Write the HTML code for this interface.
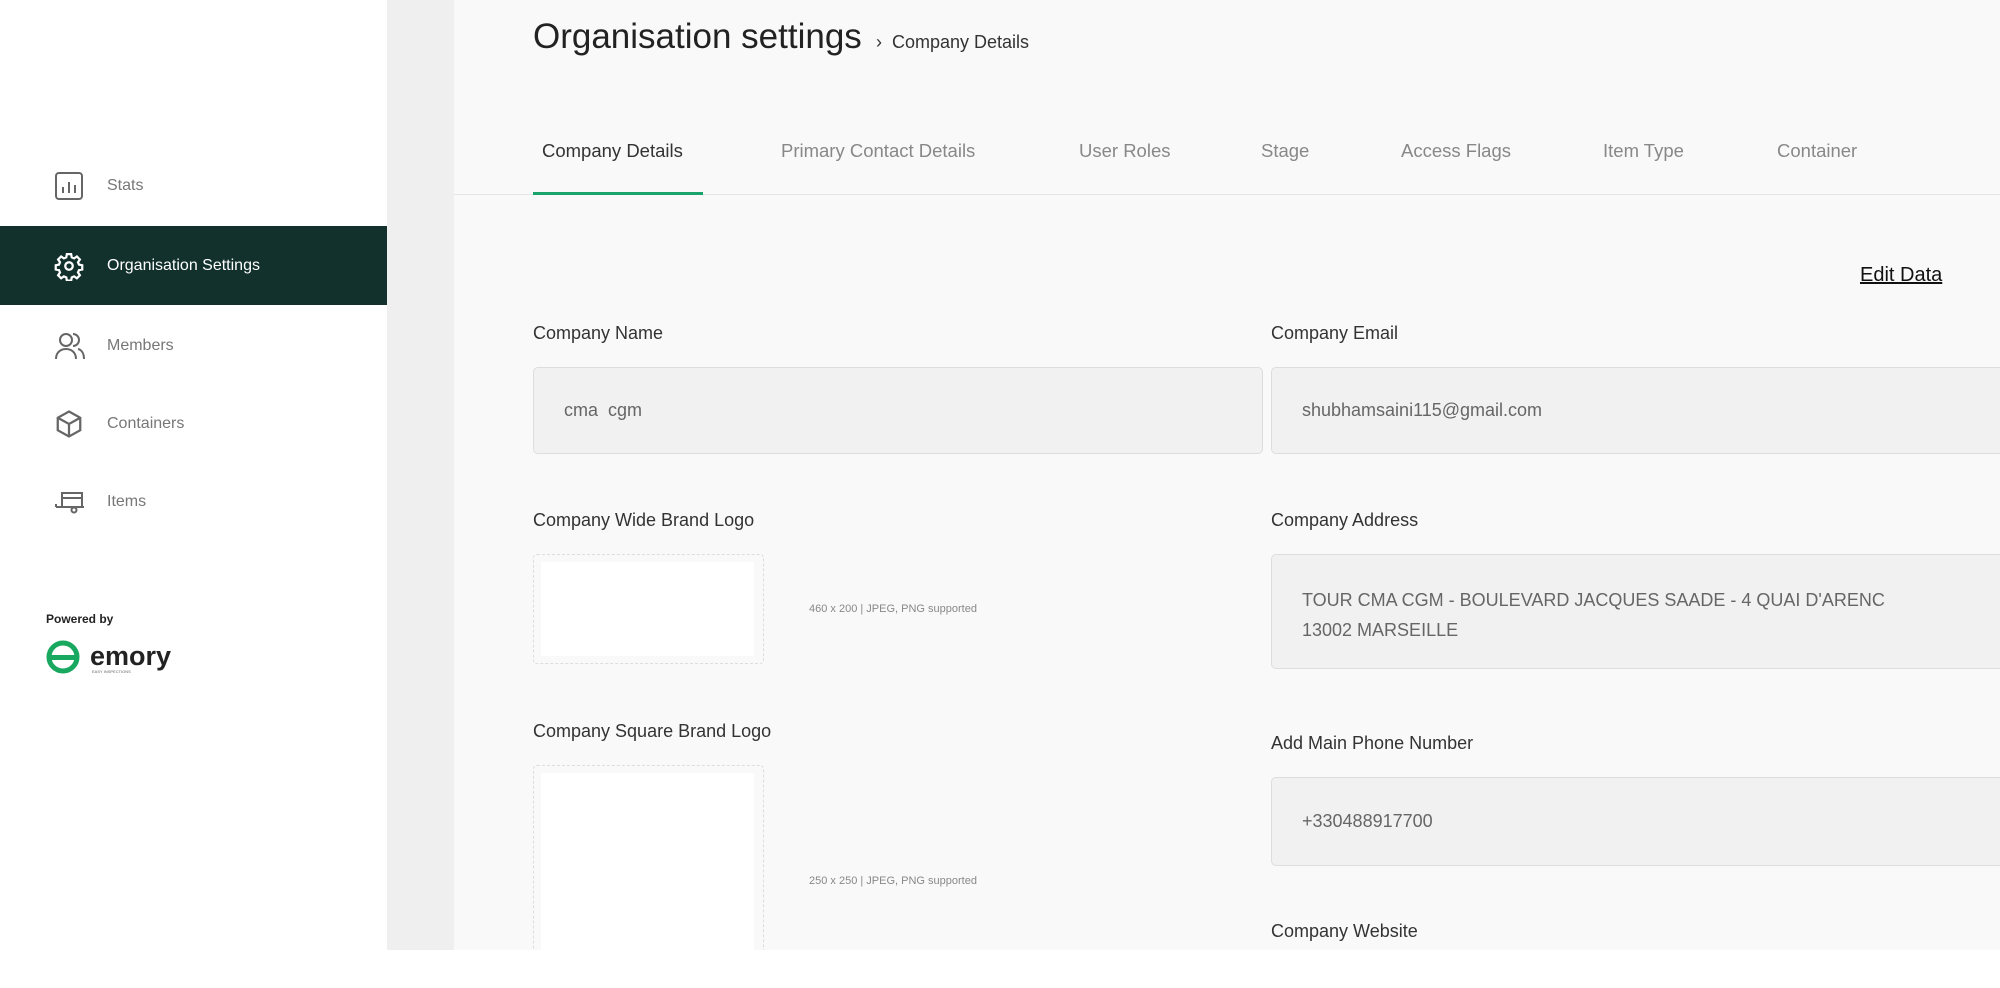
<!DOCTYPE html>
<html><head><meta charset="utf-8"><style>
*{box-sizing:border-box;margin:0;padding:0}
body{width:2000px;height:988px;overflow:hidden;background:#fff;font-family:"Liberation Sans",sans-serif;position:relative}
.abs{position:absolute}
.side{left:0;top:0;width:387px;height:988px;background:#fff}
.gray{left:387px;top:0;width:67px;height:950px;background:#efefef}
.main{left:454px;top:0;width:1546px;height:950px;background:#f9f9f9}
.nav{position:absolute;left:0;width:387px;height:79px;display:flex;align-items:center;font-size:16px;color:#777}
.nav svg{position:absolute;left:54px}
.nav span{position:absolute;left:107px}
.lbl{position:absolute;font-size:18px;color:#333}
.inp{position:absolute;background:#f1f1f1;border:1.5px solid #ddd;border-radius:5px;font-size:18px;color:#666;padding-left:30px}
.logo{position:absolute;border:1.5px dashed #ddd;border-radius:4px;background:#f9f9f9}
.logo div{position:absolute;left:7px;top:7px;right:9px;bottom:7px;background:#fff}
.hint{position:absolute;font-size:11px;color:#888}
.tab{position:absolute;top:140px;font-size:18.5px;color:#888}
</style></head><body>
<div class="abs side">
 <div class="nav" style="top:146px"><svg width="30" height="30" viewBox="0 0 30 30" fill="none" stroke="#666" stroke-width="2"><rect x="2" y="2" width="26" height="26" rx="3"/><path d="M9 22v-6M15 22v-11M21 22v-8"/></svg><span>Stats</span></div>
 <div class="nav" style="top:226px;background:#12312c;color:#fff"><svg width="30" height="30" viewBox="0 0 24 24" fill="none" stroke="#fff" stroke-width="1.8"><circle cx="12" cy="12" r="3"/><path d="M10.3 2.5h3.4l.5 2.6 1.9.8 2.2-1.5 2.4 2.4-1.5 2.2.8 1.9 2.6.5v3.4l-2.6.5-.8 1.9 1.5 2.2-2.4 2.4-2.2-1.5-1.9.8-.5 2.6h-3.4l-.5-2.6-1.9-.8-2.2 1.5-2.4-2.4 1.5-2.2-.8-1.9-2.6-.5v-3.4l2.6-.5.8-1.9-1.5-2.2 2.4-2.4 2.2 1.5 1.9-.8z"/></svg><span>Organisation Settings</span></div>
 <div class="nav" style="top:306px"><svg width="32" height="30" viewBox="0 0 32 30" fill="none" stroke="#666" stroke-width="2"><circle cx="12" cy="9" r="6"/><path d="M2 28c0-6 4-10 10-10s10 4 10 10"/><path d="M19 3a6 6 0 0 1 0 12M24 18c4 1 6 5 6 10"/></svg><span>Members</span></div>
 <div class="nav" style="top:384px"><svg width="30" height="30" viewBox="0 0 24 24" fill="none" stroke="#666" stroke-width="1.8"><path d="M12 2l9 5v10l-9 5-9-5V7z"/><path d="M3 7l9 5 9-5M12 12v10"/></svg><span>Containers</span></div>
 <div class="nav" style="top:462px"><svg width="32" height="30" viewBox="0 0 32 30" fill="none" stroke="#666" stroke-width="2"><path d="M8 6h20v14H8zM8 11h20"/><path d="M2 20h28"/><path d="M2 17v3"/><circle cx="20" cy="23" r="2.5"/></svg><span>Items</span></div>
 <div class="abs" style="left:46px;top:612px;font-size:12px;color:#222;font-weight:bold">Powered by</div>
 <svg class="abs" style="left:46px;top:640px" width="150" height="36" viewBox="0 0 150 36"><circle cx="17" cy="17" r="14" fill="none" stroke="#18a860" stroke-width="5"/><rect x="3" y="15" width="28" height="5" fill="#18a860"/><text x="44" y="25" font-family="Liberation Sans" font-weight="bold" font-size="27" fill="#222">emory</text><text x="46" y="33" font-family="Liberation Sans" font-size="4" fill="#666">EASY INSPECTIONS</text></svg>
</div>
<div class="abs gray"></div>
<div class="abs main"></div>
<div class="abs" style="left:533px;top:17px;font-size:35px;color:#222">Organisation settings</div>
<div class="abs" style="left:876px;top:32px;font-size:18px;color:#333">›&nbsp;&nbsp;Company Details</div>
<div class="tab" style="left:542px;color:#333">Company Details</div>
<div class="tab" style="left:781px">Primary Contact Details</div>
<div class="tab" style="left:1079px">User Roles</div>
<div class="tab" style="left:1261px">Stage</div>
<div class="tab" style="left:1401px">Access Flags</div>
<div class="tab" style="left:1603px">Item Type</div>
<div class="tab" style="left:1777px">Container</div>
<div class="abs" style="left:454px;top:194px;width:1546px;height:1px;background:#e6e6e6"></div>
<div class="abs" style="left:533px;top:192px;width:170px;height:3px;background:#1aa36b"></div>
<div class="abs" style="left:1860px;top:264px;font-size:20px;color:#111;text-decoration:underline">Edit Data</div>
<div class="lbl" style="left:533px;top:323px">Company Name</div>
<div class="inp" style="left:533px;top:367px;width:730px;height:87px;line-height:84px">cma&nbsp;&nbsp;cgm</div>
<div class="lbl" style="left:1271px;top:323px">Company Email</div>
<div class="inp" style="left:1271px;top:367px;width:740px;height:87px;line-height:84px">shubhamsaini115@gmail.com</div>
<div class="lbl" style="left:533px;top:510px">Company Wide Brand Logo</div>
<div class="logo" style="left:533px;top:554px;width:231px;height:110px"><div></div></div>
<div class="hint" style="left:809px;top:603px">460 x 200 | JPEG, PNG supported</div>
<div class="lbl" style="left:1271px;top:510px">Company Address</div>
<div class="inp" style="left:1271px;top:554px;width:740px;height:115px;padding-top:30px;line-height:30px">TOUR CMA CGM - BOULEVARD JACQUES SAADE - 4 QUAI D'ARENC<br>13002 MARSEILLE</div>
<div class="lbl" style="left:533px;top:721px">Company Square Brand Logo</div>
<div class="logo" style="left:533px;top:765px;width:231px;height:200px"><div></div></div>
<div class="hint" style="left:809px;top:875px">250 x 250 | JPEG, PNG supported</div>
<div class="lbl" style="left:1271px;top:733px">Add Main Phone Number</div>
<div class="inp" style="left:1271px;top:777px;width:740px;height:89px;line-height:86px">+330488917700</div>
<div class="lbl" style="left:1271px;top:921px">Company Website</div>
<div class="abs" style="left:387px;top:950px;width:1613px;height:38px;background:#fff"></div>
</body></html>
